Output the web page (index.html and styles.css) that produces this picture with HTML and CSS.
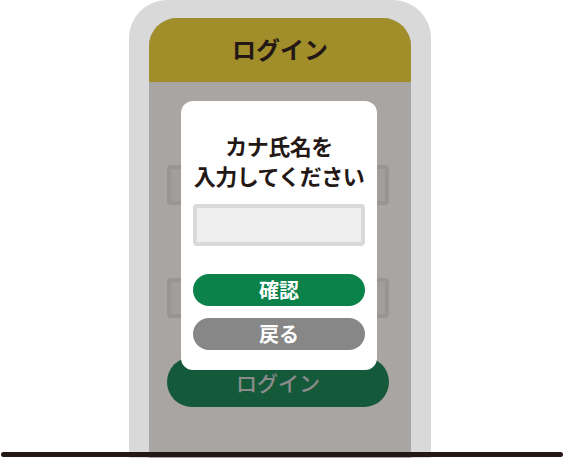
FILE: index.html
```html
<!DOCTYPE html>
<html lang="ja">
    <head>
        <meta charset="UTF-8">
        <title>カナ氏名入力</title>
        <link rel="stylesheet" href="styles.css">
    </head>
    <body>
        <div class="phone">
            <div class="screen">
                <div class="header">ログイン</div>
                <div class="form">
                    <div class="field"></div>
                    <div class="field"></div>
                    <div class="login-btn">ログイン</div>
                </div>
                <div class="modal">
                    <p class="modal-title">カナ氏名を<br>入力してください</p>
                    <input class="modal-input" type="text">
                    <button class="btn btn-ok">確認</button>
                    <button class="btn btn-back">戻る</button>
                </div>
            </div>
        </div>
        <div class="ground"></div>
    </body>
</html>
```

FILE: styles.css
```css
html, body {
    margin: 0;
    height: 458px;
    overflow: hidden;
    background: #fff;
    font-family: "Noto Sans CJK JP", "Noto Sans", sans-serif;
}

.phone {
    box-sizing: border-box;
    width: 302px;
    height: 458px;
    margin-left: 129px;
    padding: 18px 20px 0;
    background: #d9d9d9;
    border-radius: 38px 38px 0 0;
}
.screen {
    position: relative;
    height: 100%;
    background: #a9a5a3;
    border-radius: 28px 28px 0 0;
    overflow: hidden;
}
.header {
    height: 64px;
    background: #a28d2b;
    color: #231815;
    font-size: 24px;
    font-weight: bold;
    line-height: 62px;
    text-align: center;
}

.form {
    display: flex;
    flex-direction: column;
    padding: 83px 22px 0 18px;
}
.field {
    box-sizing: border-box;
    height: 40px;
    margin-bottom: 73px;
    background: #a29e9c;
    border: 4px solid #999593;
    border-radius: 4px;
}
.field + .field {
    margin-bottom: 39px;
}
.login-btn {
    height: 50px;
    border-radius: 25px;
    background: #145a3a;
    color: #8b8b8b;
    font-size: 21px;
    font-weight: 500;
    line-height: 50px;
    text-align: center;
}

.modal {
    position: absolute;
    left: 32px;
    top: 83px;
    box-sizing: border-box;
    width: 196px;
    padding: 29px 12px 20px;
    background: #fff;
    border-radius: 12px;
    display: flex;
    flex-direction: column;
}
.modal-title {
    margin: 0 -10px 14px;
    color: #231815;
    font-size: 22px;
    font-weight: bold;
    letter-spacing: -0.5px;
    line-height: 30px;
    white-space: nowrap;
    text-align: center;
}
.modal-input {
    box-sizing: border-box;
    height: 42px;
    margin: 0 0 28px;
    background: #efefef;
    border: 4px solid #d9d9d9;
    border-radius: 4px;
}
.btn {
    height: 32px;
    padding: 0;
    border: none;
    border-radius: 16px;
    color: #fff;
    font-family: inherit;
    font-size: 20px;
    font-weight: bold;
    line-height: 32px;
}
.btn-ok {
    background: #0b8249;
    margin-bottom: 12px;
}
.btn-back {
    background: #878787;
}

.ground {
    position: absolute;
    left: 1px;
    right: 1px;
    top: 452px;
    height: 5px;
    border-radius: 3px;
    background: #231815;
}
```
